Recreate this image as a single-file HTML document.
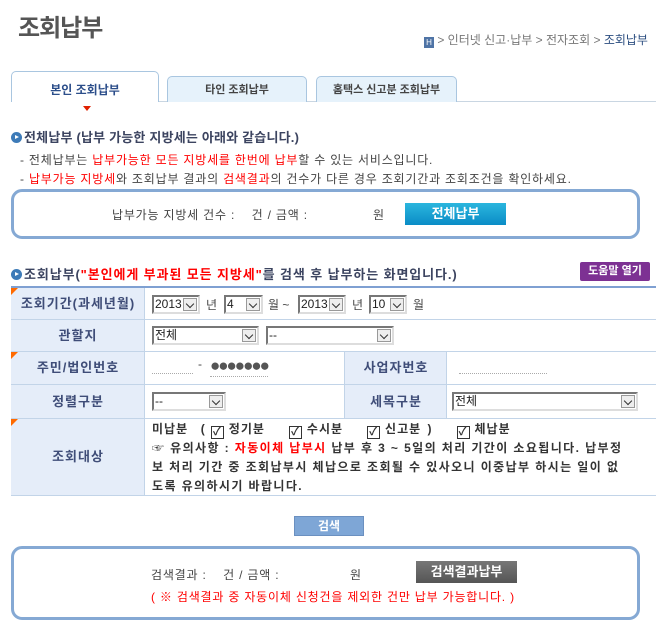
<!DOCTYPE html>
<html><head><meta charset="utf-8"><style>
*{margin:0;padding:0;box-sizing:border-box}
body{width:667px;height:629px;background:#fff;position:relative;overflow:hidden;font-family:"Liberation Sans","Noto Sans CJK KR","NanumGothic",sans-serif;font-size:12px;color:#444}
.a{position:absolute;white-space:nowrap}
.tab{position:absolute;border:1px solid #a9c6e0;border-bottom:none;border-radius:5px 5px 0 0;background:#e6f2fb;text-align:center;font-size:11px;font-weight:bold;color:#444}
.box{position:absolute;left:11px;width:629px;border:3px solid #85a9d4;border-radius:11px}
.h{font-weight:bold;font-size:13px;color:#3c4460;letter-spacing:0.9px}
.ic{display:inline-block;width:11px;height:11px;border-radius:50%;background:#3d7bb8;vertical-align:-1px;margin-right:2px;position:relative}
.ic:after{content:"";position:absolute;left:4px;top:3px;border-left:4px solid #fff;border-top:2.5px solid transparent;border-bottom:2.5px solid transparent}
.lab{position:absolute;background:#e5edf9;color:#3f4d78;font-weight:bold;font-size:13px;text-align:center;border-bottom:1px solid #c2d4e8;letter-spacing:1px}
.val{position:absolute;border-bottom:1px solid #c2d4e8;border-left:1px solid #c2d4e8}
.tri{position:absolute;left:0;top:0;border-top:7px solid #ff6a00;border-right:7px solid transparent}
.sel{position:absolute;height:19px;border:2px solid #777;border-right-color:#ddd;border-bottom-color:#ddd;background:#fff;font-size:12px;line-height:15px;padding-left:1px;color:#222}
.sel i{position:absolute;right:1px;top:1px;width:14px;height:13px;background:#eee;border:1px solid #999}
.sel i:after{content:"";position:absolute;left:3px;top:2px;width:5px;height:5px;border-right:1.5px solid #333;border-bottom:1.5px solid #333;transform:rotate(45deg)}
.cb{display:inline-block;width:13px;height:13px;border:1px solid #333;vertical-align:-2px;font-size:11px;line-height:11px;text-align:center;margin:0 5px}
.red{color:#f00}
.sp{letter-spacing:0.8px}
</style></head><body>
<div class="a" style="left:18px;top:8px;font-size:24px;font-weight:bold;color:#555;letter-spacing:-1px">조회납부</div>
<div class="a" style="left:424px;top:31px;font-size:12px;color:#777"><span style="display:inline-block;width:10px;height:11px;background:#4f74a6;color:#fff;font-size:8px;line-height:11px;text-align:center;vertical-align:-1px">H</span> &gt; 인터넷 신고·납부 &gt; 전자조회 &gt; <span style="color:#2c4e80">조회납부</span></div>
<div class="a" style="left:11px;top:101px;width:645px;height:1px;background:#c9d6e2"></div>
<div class="tab" style="left:11px;top:71px;width:148px;height:31px;background:#fff;line-height:36px;color:#2c4e8a;font-size:12px">본인 조회납부</div>
<div class="tab" style="left:167px;top:76px;width:140px;height:26px;line-height:26px">타인 조회납부</div>
<div class="tab" style="left:316px;top:76px;width:141px;height:26px;line-height:26px">홈택스 신고분 조회납부</div>
<div class="a" style="left:83px;top:106px;border-top:5px solid #e02000;border-left:4px solid transparent;border-right:4px solid transparent"></div>
<div class="a h" style="left:11px;top:127px;letter-spacing:0.2px"><span class="ic"></span>전체납부 (납부 가능한 지방세는 아래와 같습니다.)</div>
<div class="a sp" style="left:20px;top:151px">- 전체납부는 <span class="red">납부가능한 모든 지방세를 한번에 납부</span>할 수 있는 서비스입니다.</div>
<div class="a sp" style="left:20px;top:170px">- <span class="red">납부가능 지방세</span>와 조회납부 결과의 <span class="red">검색결과</span>의 건수가 다른 경우 조회기간과 조회조건을 확인하세요.</div>
<div class="box" style="top:189px;height:50px"></div>
<div class="a sp" style="left:112px;top:206px">납부가능 지방세 건수 :&nbsp;&nbsp;&nbsp; 건 / 금액 :</div>
<div class="a" style="left:373px;top:206px">원</div>
<div class="a" style="left:405px;top:203px;width:101px;height:22px;background:linear-gradient(#2bb6de,#0a8cc6);color:#fff;font-weight:bold;font-size:13px;text-align:center;line-height:22px">전체납부</div>
<div class="a h" style="left:11px;top:264px"><span class="ic"></span>조회납부(<span class="red">"본인에게 부과된 모든 지방세"</span>를 검색 후 납부하는 화면입니다.)</div>
<div class="a" style="left:580px;top:262px;width:70px;height:19px;background:#7d3193;color:#fff;font-weight:bold;font-size:11px;text-align:center;line-height:19px;border-radius:2px">도움말 열기</div>
<div class="a" style="left:11px;top:286px;width:645px;height:2px;background:#7fa0d2"></div>
<div class="lab" style="left:11px;top:288px;width:134px;height:32px;line-height:31px"><div class="tri"></div>조회기간(과세년월)</div>
<div class="val" style="left:144px;top:288px;width:512px;height:32px"></div>
<div class="sel" style="left:152px;top:295px;width:48px">2013<i></i></div>
<div class="a" style="left:206px;top:296px">년</div>
<div class="sel" style="left:224px;top:295px;width:39px">4<i></i></div>
<div class="a" style="left:268px;top:296px">월 ~</div>
<div class="sel" style="left:298px;top:295px;width:48px">2013<i></i></div>
<div class="a" style="left:352px;top:296px">년</div>
<div class="sel" style="left:369px;top:295px;width:38px">10<i></i></div>
<div class="a" style="left:413px;top:296px">월</div>
<div class="lab" style="left:11px;top:320px;width:134px;height:32px;line-height:31px">관할지</div>
<div class="val" style="left:144px;top:320px;width:512px;height:32px"></div>
<div class="sel" style="left:152px;top:326px;width:107px">전체<i></i></div>
<div class="sel" style="left:266px;top:326px;width:128px">--<i></i></div>
<div class="lab" style="left:11px;top:352px;width:134px;height:33px;line-height:32px"><div class="tri"></div>주민/법인번호</div>
<div class="val" style="left:144px;top:352px;width:200px;height:33px"></div>
<div class="a" style="left:152px;top:373px;width:41px;border-top:1px dotted #aaa"></div>
<div class="a" style="left:198px;top:357px;font-size:12px">-</div>
<div class="a" style="left:210px;top:356px;font-size:17px;color:#555;letter-spacing:-2px;border-bottom:1px dotted #aaa">●●●●●●●</div>
<div class="lab" style="left:344px;top:352px;width:103px;height:33px;line-height:32px;border-left:1px solid #c2d4e8">사업자번호</div>
<div class="val" style="left:446px;top:352px;width:210px;height:33px"></div>
<div class="a" style="left:459px;top:373px;width:88px;border-top:1px dotted #aaa"></div>
<div class="lab" style="left:11px;top:385px;width:134px;height:34px;line-height:33px">정렬구분</div>
<div class="val" style="left:144px;top:385px;width:200px;height:34px"></div>
<div class="sel" style="left:152px;top:392px;width:74px">--<i></i></div>
<div class="lab" style="left:344px;top:385px;width:103px;height:34px;line-height:33px;border-left:1px solid #c2d4e8">세목구분</div>
<div class="val" style="left:446px;top:385px;width:210px;height:34px"></div>
<div class="sel" style="left:452px;top:392px;width:186px">전체<i></i></div>
<div class="lab" style="left:11px;top:419px;width:134px;height:77px;line-height:76px"><div class="tri"></div>조회대상</div>
<div class="val" style="left:144px;top:419px;width:512px;height:77px"></div>
<div class="a" style="left:152px;top:420px;font-size:12px;color:#333;font-weight:bold;letter-spacing:1px;word-spacing:2px">미납분 &nbsp;(<span class="cb">✓</span>정기분 &nbsp;&nbsp;<span class="cb">✓</span>수시분 &nbsp;&nbsp;<span class="cb">✓</span>신고분 ) &nbsp;&nbsp;<span class="cb">✓</span>체납분</div>
<div class="a" style="left:152px;top:439px;font-size:12px;color:#333;line-height:19px;font-weight:bold;letter-spacing:1.4px">☞ 유의사항 : <span class="red">자동이체 납부시</span> 납부 후 3 ~ 5일의 처리 기간이 소요됩니다. 납부정<br>보 처리 기간 중 조회납부시 체납으로 조회될 수 있사오니 이중납부 하시는 일이 없<br>도록 유의하시기 바랍니다.</div>
<div class="a" style="left:294px;top:516px;width:70px;height:20px;background:#7ea6d6;border:1px solid #6b90c0;color:#fff;font-weight:bold;text-align:center;line-height:18px">검색</div>
<div class="box" style="top:546px;height:74px"></div>
<div class="a sp" style="left:151px;top:566px">검색결과 :&nbsp;&nbsp;&nbsp; 건 / 금액 :</div>
<div class="a" style="left:350px;top:566px">원</div>
<div class="a" style="left:416px;top:561px;width:101px;height:22px;background:linear-gradient(#777,#555);color:#fff;font-weight:bold;font-size:13px;text-align:center;line-height:22px">검색결과납부</div>
<div class="a red" style="left:151px;top:588px;letter-spacing:0.8px">( ※ 검색결과 중 자동이체 신청건을 제외한 건만 납부 가능합니다. )</div>
</body></html>
